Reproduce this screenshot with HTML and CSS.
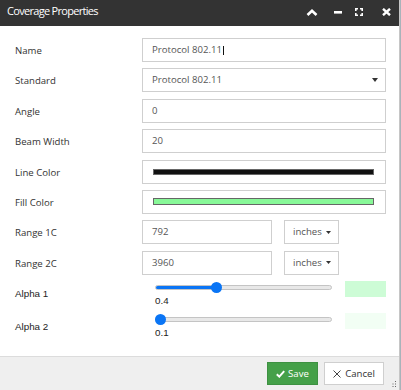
FILE: index.html
```html
<!DOCTYPE html>
<html>
<head>
<meta charset="utf-8">
<link rel="stylesheet" href="styles.css">
</head>
<body>
<div class="dialog">
  <div class="titlebar">
    <span class="title">Coverage Properties</span>
    <div class="tools">
      <svg class="ic ic-up" width="12" height="7" viewBox="0 0 12 7"><polyline points="1.5,6 6,1.8 10.5,6" fill="none" stroke="#fff" stroke-width="2.6"/></svg>
      <svg class="ic ic-min" width="8" height="3" viewBox="0 0 8 3"><rect x="0" y="0" width="8" height="2.6" fill="#fff"/></svg>
      <svg class="ic ic-exp" width="8" height="8" viewBox="0 0 8 8"><g fill="#fff"><path d="M0 0h3v1.6H1.6V3H0z"/><path d="M8 0H5v1.6h1.4V3H8z"/><path d="M0 8h3V6.4H1.6V5H0z"/><path d="M8 8H5V6.4h1.4V5H8z"/></g></svg>
      <svg class="ic ic-close" width="9" height="8" viewBox="0 0 9 8"><path d="M1 0.8 L8 7.2 M8 0.8 L1 7.2" stroke="#fff" stroke-width="2.4"/></svg>
    </div>
  </div>

  <div class="content">
    <div class="form">
      <div class="lbl">Name</div>
      <div class="input">Protocol 802.11<span class="caret"></span></div>

      <div class="lbl">Standard</div>
      <div class="input select"><span>Protocol 802.11</span><svg width="6" height="4" viewBox="0 0 6 4"><path d="M0 0h6L3 4z" fill="#333"/></svg></div>

      <div class="lbl">Angle</div>
      <div class="input">0</div>

      <div class="lbl">Beam Width</div>
      <div class="input">20</div>

      <div class="lbl">Line Color</div>
      <div class="input colorinput"><div class="colorbar line"></div></div>

      <div class="lbl">Fill Color</div>
      <div class="input colorinput"><div class="colorbar fill"></div></div>

      <div class="lbl">Range 1C</div>
      <div class="pair">
        <div class="input short">792</div>
        <div class="input unit"><span>inches</span><svg width="5" height="3" viewBox="0 0 5 3"><path d="M0 0h5L2.5 3z" fill="#333"/></svg></div>
      </div>

      <div class="lbl">Range 2C</div>
      <div class="pair">
        <div class="input short">3960</div>
        <div class="input unit"><span>inches</span><svg width="5" height="3" viewBox="0 0 5 3"><path d="M0 0h5L2.5 3z" fill="#333"/></svg></div>
      </div>
    </div>

    <div class="alpha">
      <div class="alpha-lbl">Alpha 1</div>
      <div class="alpha-ctl">
        <div class="slider">
          <div class="track-wrap">
            <div class="track"><div class="track-fill" style="width:62px"></div></div>
            <div class="thumb" style="left:56px"></div>
          </div>
          <div class="val">0.4</div>
        </div>
        <div class="swatch s1"></div>
      </div>

      <div class="alpha-lbl second">Alpha 2</div>
      <div class="alpha-ctl">
        <div class="slider">
          <div class="track-wrap">
            <div class="track"><div class="track-fill" style="width:5px"></div></div>
            <div class="thumb" style="left:0px"></div>
          </div>
          <div class="val">0.1</div>
        </div>
        <div class="swatch s2"></div>
      </div>
    </div>
  </div>

  <div class="footer">
    <button class="btn save"><svg width="9" height="8" viewBox="0 0 9 8"><path d="M0.8 4.2 L3.3 6.6 L8.2 1.2" fill="none" stroke="#fff" stroke-width="2"/></svg><span>Save</span></button>
    <button class="btn cancel"><svg width="8" height="8" viewBox="0 0 8 8"><path d="M0.5 0.5 L7.5 7.5 M7.5 0.5 L0.5 7.5" stroke="#444" stroke-width="1"/></svg><span>Cancel</span></button>
  </div>

  <svg class="grip" width="6" height="7" viewBox="0 0 6 7"><g fill="#666"><rect x="4" y="0" width="1" height="1"/><rect x="4" y="2.5" width="1" height="1"/><rect x="1.5" y="2.5" width="1" height="1"/><rect x="4" y="5" width="1" height="1"/><rect x="1.5" y="5" width="1" height="1"/><rect x="-1" y="5" width="1" height="1"/></g></svg>
</div>
</body>
</html>
```
FILE: styles.css
```css
html, body {
  margin: 0;
  padding: 0;
}
body {
  width: 401px;
  height: 390px;
  overflow: hidden;
  background: #a8b3ba;
  font-family: "Open Sans", "Liberation Sans", sans-serif;
}
.dialog {
  width: 399px;
  height: 390px;
  background: #fff;
  border-right: 1px solid #c6c6c6;
  display: flex;
  flex-direction: column;
  position: relative;
}
.titlebar {
  flex: none;
  height: 26px;
  background: #333;
  display: flex;
  justify-content: space-between;
  align-items: flex-start;
  padding-left: 7px;
  box-sizing: border-box;
}
.title {
  color: #fff;
  font-size: 11px;
  line-height: 22px;
  letter-spacing: -0.7px;
}
.tools {
  display: flex;
  align-items: center;
  height: 24px;
  padding-right: 8px;
}
.ic { display: block; }
.ic-min { margin-left: 16px; }
.ic-exp { margin-left: 13px; }
.ic-close { margin-left: 19px; }

.content {
  flex: 1;
  padding: 12px 13px 0 15px;
}
.form {
  display: grid;
  grid-template-columns: 127px 244px;
  grid-auto-rows: 24px;
  row-gap: 6.4px;
}
.lbl {
  font-size: 9.6px;
  line-height: 25px;
  color: #333;
}
.input {
  box-sizing: border-box;
  height: 24px;
  border: 1px solid #cfcfcf;
  padding-left: 9px;
  font-size: 9.6px;
  line-height: 22px;
  color: #555;
  background: #fff;
  display: flex;
  align-items: center;
  white-space: nowrap;
}
.caret {
  display: inline-block;
  width: 1px;
  height: 9px;
  background: #111;
  margin-left: 1px;
}
.select {
  justify-content: space-between;
  padding-right: 7px;
}
.colorinput {
  padding: 0 11px 0 10px;
}
.colorbar {
  flex: 1;
  box-sizing: border-box;
  border: 1px solid #666;
}
.colorbar.line {
  height: 6px;
  background: #111;
}
.colorbar.fill {
  height: 7px;
  background: #88f898;
}
.pair {
  display: flex;
  gap: 12px;
}
.short {
  width: 130px;
}
.unit {
  width: 55px;
  padding-left: 8px;
  gap: 4px;
}

.alpha {
  margin-top: 6.2px;
  display: grid;
  grid-template-columns: 127px 244px;
  grid-auto-rows: 32px;
}
.alpha-lbl {
  font-family: "Liberation Sans", Arial, sans-serif;
  font-size: 9.8px;
  line-height: 26px;
  color: #222;
}
.alpha-lbl.second {
  line-height: 28px;
}
.alpha-ctl {
  display: flex;
  align-items: flex-start;
  padding-left: 13px;
  gap: 13px;
}
.slider {
  width: 177px;
}
.track-wrap {
  position: relative;
  height: 14px;
}
.track {
  position: relative;
  top: 4.5px;
  height: 5px;
  box-sizing: border-box;
  border-radius: 3px;
  background: #e8e8e8;
  border: 1px solid #c4c4c4;
  overflow: hidden;
}
.track-fill {
  height: 100%;
  background: #0a75f5;
}
.thumb {
  position: absolute;
  top: 1.5px;
  width: 11px;
  height: 11px;
  border-radius: 50%;
  background: #0a75f5;
}
.val {
  font-family: "Liberation Sans", Arial, sans-serif;
  font-size: 9.8px;
  line-height: 12px;
  color: #222;
}
.swatch {
  width: 41px;
  height: 16px;
}
.s1 { background: #cdfcd6; }
.s2 { background: #f2fef4; }

.footer {
  flex: none;
  height: 34px;
  box-sizing: border-box;
  border-top: 1px solid #dcdcdc;
  background: #efefef;
  display: flex;
  justify-content: flex-end;
  align-items: center;
  gap: 6px;
  padding-right: 15px;
}
.btn {
  box-sizing: border-box;
  height: 23px;
  margin: 0;
  padding: 0;
  font-family: "Open Sans", sans-serif;
  font-size: 9.6px;
  display: flex;
  align-items: center;
  justify-content: center;
  gap: 3px;
  border-radius: 0;
}
.save {
  width: 51px;
  background: #45a049;
  border: 1px solid #3e9142;
  color: #fff;
}
.cancel {
  width: 60px;
  background: #fff;
  border: 1px solid #cfcfcf;
  color: #333;
  gap: 4px;
}
.grip {
  position: absolute;
  right: 2px;
  bottom: 2px;
}
```
